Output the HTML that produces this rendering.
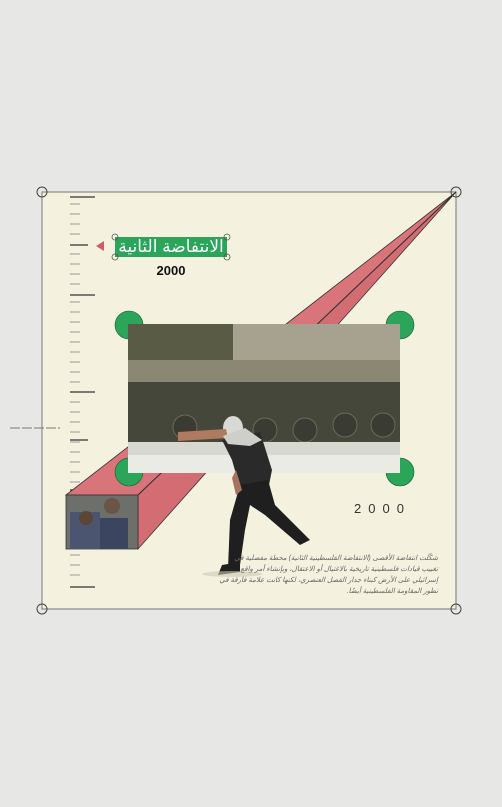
<!DOCTYPE html>
<html><head><meta charset="utf-8"><style>
html,body{margin:0;padding:0}
body{width:502px;height:807px;background:#e7e7e5;position:relative;overflow:hidden;font-family:"Liberation Sans",sans-serif}
.t{position:absolute}
</style></head><body>
<svg class="t" style="left:0;top:0" width="502" height="807" viewBox="0 0 502 807">
 <rect x="42" y="192" width="414" height="417" fill="#f4f2df" stroke="#8a8a86" stroke-width="1.2"/>
 <g stroke="#9a9a94" stroke-width="1">
  <line x1="70" y1="204" x2="80" y2="204"/><line x1="70" y1="214" x2="80" y2="214"/><line x1="70" y1="224" x2="80" y2="224"/><line x1="70" y1="234" x2="80" y2="234"/><line x1="70" y1="254" x2="80" y2="254"/><line x1="70" y1="264" x2="80" y2="264"/><line x1="70" y1="274" x2="80" y2="274"/><line x1="70" y1="284" x2="80" y2="284"/>
  <line x1="70" y1="302" x2="80" y2="302"/><line x1="70" y1="312" x2="80" y2="312"/><line x1="70" y1="322" x2="80" y2="322"/><line x1="70" y1="332" x2="80" y2="332"/><line x1="70" y1="342" x2="80" y2="342"/><line x1="70" y1="352" x2="80" y2="352"/><line x1="70" y1="362" x2="80" y2="362"/><line x1="70" y1="372" x2="80" y2="372"/><line x1="70" y1="382" x2="80" y2="382"/><line x1="70" y1="402" x2="80" y2="402"/><line x1="70" y1="412" x2="80" y2="412"/><line x1="70" y1="422" x2="80" y2="422"/><line x1="70" y1="432" x2="80" y2="432"/><line x1="70" y1="442" x2="80" y2="442"/><line x1="70" y1="452" x2="80" y2="452"/><line x1="70" y1="462" x2="80" y2="462"/><line x1="70" y1="472" x2="80" y2="472"/><line x1="70" y1="482" x2="80" y2="482"/>
  <line x1="70" y1="555" x2="80" y2="555"/><line x1="70" y1="565" x2="80" y2="565"/><line x1="70" y1="575" x2="80" y2="575"/>
 </g>
 <g stroke="#333" stroke-width="1.3">
  <line x1="70" y1="197" x2="95" y2="197"/><line x1="70" y1="245" x2="88" y2="245"/><line x1="70" y1="295" x2="95" y2="295"/><line x1="70" y1="392" x2="95" y2="392"/><line x1="70" y1="440" x2="88" y2="440"/><line x1="70" y1="490" x2="95" y2="490"/><line x1="70" y1="587" x2="95" y2="587"/>
 </g>
 <line x1="10" y1="428" x2="60" y2="428" stroke="#777" stroke-dasharray="10,2"/>
 <polygon points="66,495 138,495 456,192" fill="#d9747b" stroke="#333" stroke-width="0.8"/>
 <polygon points="138,495 138,549 456,192" fill="#d46c74" stroke="#333" stroke-width="0.8"/>
 <line x1="138" y1="495" x2="456" y2="192" stroke="#333" stroke-width="1"/>
 <g fill="#2aa55a" stroke="#1d5e33" stroke-width="0.6">
  <circle cx="129" cy="325" r="14"/><circle cx="400" cy="325" r="14"/><circle cx="129" cy="472" r="14"/><circle cx="400" cy="472" r="14"/>
 </g>
 <rect x="128" y="324" width="272" height="149" fill="#8c8a78"/>
 <rect x="128" y="324" width="105" height="40" fill="#5a5b45"/>
 <rect x="233" y="324" width="167" height="45" fill="#a7a290"/>
 <rect x="128" y="380" width="272" height="62" fill="#45473b"/>
 <rect x="128" y="360" width="272" height="22" fill="#8a8772"/>
 <g fill="#3a3b32" stroke="#6a6a5c"><circle cx="185" cy="427" r="12"/><circle cx="265" cy="430" r="12"/><circle cx="305" cy="430" r="12"/><circle cx="345" cy="425" r="12"/><circle cx="383" cy="425" r="12"/></g>
 <rect x="128" y="442" width="272" height="31" fill="#d8d8d0"/>
 <rect x="128" y="455" width="272" height="18" fill="#ebebe6"/>
 <rect x="66" y="495" width="72" height="54" fill="#6d6f6a" stroke="#333" stroke-width="0.8"/>
 <rect x="70" y="512" width="30" height="37" fill="#4b5570"/>
 <circle cx="86" cy="518" r="7" fill="#5c4536"/>
 <circle cx="112" cy="506" r="8" fill="#6b5547"/>
 <rect x="100" y="518" width="28" height="31" fill="#3c4560"/>
 <g fill="#1f1f1f">
  <ellipse cx="233" cy="428" rx="10" ry="12" fill="#d8d8d4"/>
  <path d="M178,432 L226,429 L228,438 L178,441 Z" fill="#b07a60"/>
  <path d="M222,440 L260,432 L272,470 L268,490 L240,488 L232,460 Z" fill="#2a2a2a"/>
  <path d="M223,436 L245,428 L262,440 L250,446 L228,444Z" fill="#cfcfc9"/>
  <path d="M240,485 L268,480 L275,505 L300,530 L310,540 L300,545 L265,515 L250,505 L245,530 L240,565 L228,568 L230,520 Z"/>
  <path d="M222,565 L240,562 L240,572 L218,575 Z"/>
  <path d="M236,470 L242,490 L236,495 L232,478Z" fill="#a6745e"/>
 </g>
 <ellipse cx="232" cy="574" rx="30" ry="3" fill="#ccc8b4" opacity="0.6"/>
 <polygon points="96,246 104,241 104,251" fill="#d35a63"/>
 <rect x="115" y="237" width="112" height="20" fill="#2aa55a"/>
 <g fill="none" stroke="#555" stroke-width="0.8"><circle cx="115" cy="237" r="3"/><circle cx="227" cy="237" r="3"/><circle cx="115" cy="257" r="3"/><circle cx="227" cy="257" r="3"/></g>
 <g fill="none" stroke="#444" stroke-width="1"><circle cx="42" cy="192" r="5"/><circle cx="456" cy="192" r="5"/><circle cx="42" cy="609" r="5"/><circle cx="456" cy="609" r="5"/></g>
</svg>
<div class="t" style="left:115px;top:236px;width:112px;height:22px;line-height:22px;text-align:center;color:#fff;font-size:17px;font-family:'Liberation Sans','Noto Sans CJK SC',sans-serif" dir="rtl">الانتفاضة الثانية</div>
<div class="t" style="left:150px;top:263px;width:42px;text-align:center;font-weight:bold;font-size:13px;color:#111">2000</div>
<div class="t" style="left:354px;top:501px;font-size:13px;letter-spacing:7px;color:#333">2000</div>
<div class="t" dir="rtl" style="left:216px;top:553px;width:222px;font-size:7px;line-height:11px;color:#666;font-style:italic;text-align:right">شكّلت انتفاضة الأقصى (الانتفاضة الفلسطينية الثانية) محطة مفصلية في تغييب قيادات فلسطينية تاريخية بالاغتيال أو الاعتقال، وبإنشاء أمر واقع إسرائيلي على الأرض كبناء جدار الفصل العنصري، لكنها كانت علامة فارقة في تطور المقاومة الفلسطينية أيضًا.</div>
</body></html>
